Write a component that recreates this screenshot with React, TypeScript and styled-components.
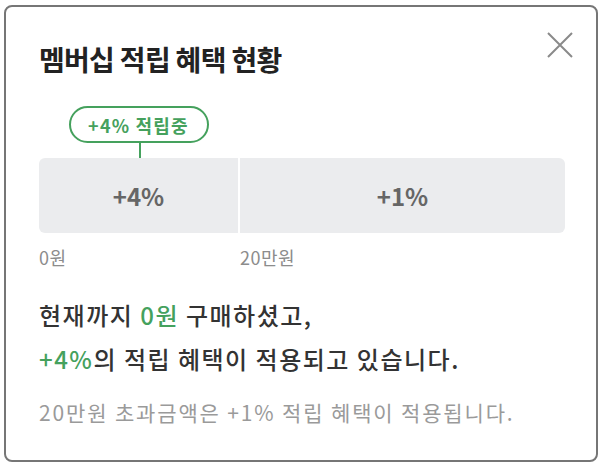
import styled, { createGlobalStyle } from "styled-components";

const GlobalStyle = createGlobalStyle`
  html, body {
    margin: 0;
    padding: 0;
    background: #ffffff;
  }
  body {
    font-family: "Noto Sans CJK KR", "Noto Sans", sans-serif;
    color: #222222;
  }
`;

const GREEN = "#45a15d";

const tiers = [
  { rate: "+4%", from: "0원", width: "199px", active: true },
  { rate: "+1%", from: "20만원", width: "1fr", active: false },
];

const App = () => {
  return (
    <>
      <GlobalStyle />
      <Page>
        <Modal>
          <Header>
            <Title>멤버십 적립 혜택 현황</Title>
            <CloseButton aria-label="닫기">
              <svg width="26" height="26" viewBox="0 0 26 26" fill="none">
                <path d="M1 1L25 25M25 1L1 25" stroke="#8a8a8a" strokeWidth="2" />
              </svg>
            </CloseButton>
          </Header>

          <Track $columns={tiers.map((t) => t.width).join(" ")}>
            {tiers.map((tier, i) => (
              <Flag key={"flag" + i}>
                {tier.active && (
                  <>
                    <Badge>{tier.rate} 적립중</Badge>
                    <Stem />
                  </>
                )}
              </Flag>
            ))}
            {tiers.map((tier, i) => (
              <Segment key={"seg" + i} $first={i === 0} $last={i === tiers.length - 1}>
                {tier.rate}
              </Segment>
            ))}
            {tiers.map((tier, i) => (
              <Mark key={"mark" + i}>{tier.from}</Mark>
            ))}
          </Track>

          <Summary>
            <Line>
              현재까지 <Accent>0원</Accent> 구매하셨고,
            </Line>
            <Line>
              <Accent>+4%</Accent>의 적립 혜택이 적용되고 있습니다.
            </Line>
          </Summary>
          <Note>20만원 초과금액은 +1% 적립 혜택이 적용됩니다.</Note>
        </Modal>
      </Page>
    </>
  );
};

export default App;

const Page = styled.div`
  width: 605px;
  height: 466px;
  padding: 5px 7px 4px 4px;
  box-sizing: border-box;
  display: flex;
`;

const Modal = styled.section`
  flex: 1;
  box-sizing: border-box;
  border: 2px solid #767676;
  border-radius: 8px;
  background: #ffffff;
  padding: 25px 23px 0 33px;
  display: flex;
  flex-direction: column;
`;

const Header = styled.header`
  display: flex;
  justify-content: space-between;
  align-items: flex-start;
`;

const Title = styled.h2`
  margin: 9px 0 0;
  font-size: 28px;
  line-height: 36px;
  font-weight: 700;
  color: #222222;
  letter-spacing: -0.7px;
`;

const CloseButton = styled.button`
  border: 0;
  background: none;
  padding: 0;
  margin: 0;
  width: 26px;
  height: 26px;
  display: flex;
  cursor: pointer;
`;

const Track = styled.div<{ $columns: string }>`
  margin-top: 29px;
  margin-right: 8px;
  display: grid;
  grid-template-columns: ${(p) => p.$columns};
  column-gap: 2px;
`;

const Flag = styled.div`
  height: 52px;
  display: flex;
  flex-direction: column;
  align-items: center;
  justify-content: flex-end;
`;

const Badge = styled.div`
  box-sizing: border-box;
  width: 140px;
  height: 37px;
  border: 2px solid ${GREEN};
  border-radius: 19px;
  display: flex;
  align-items: center;
  justify-content: center;
  font-size: 18px;
  font-weight: 700;
  letter-spacing: 1.2px;
  color: ${GREEN};
`;

const Stem = styled.div`
  width: 2px;
  height: 15px;
  margin-left: 2px;
  background: ${GREEN};
`;

const Segment = styled.div<{ $first: boolean; $last: boolean }>`
  height: 75px;
  background: #ebecee;
  border-radius: ${(p) => (p.$first ? "6px 0 0 6px" : p.$last ? "0 6px 6px 0" : "0")};
  display: flex;
  align-items: center;
  justify-content: center;
  font-size: 24px;
  font-weight: 700;
  color: #666666;
`;

const Mark = styled.div`
  margin-top: 12px;
  font-size: 18px;
  line-height: 24px;
  letter-spacing: 0.5px;
  color: #8c8c8c;
`;

const Summary = styled.div`
  margin-top: 29px;
  display: flex;
  flex-direction: column;
  gap: 10px;
`;

const Line = styled.p`
  margin: 0;
  font-size: 24px;
  line-height: 34px;
  font-weight: 500;
  color: #333333;
  letter-spacing: 1.5px;
`;

const Accent = styled.span`
  color: ${GREEN};
`;

const Note = styled.p`
  margin: 23px 0 0;
  font-size: 21px;
  line-height: 26px;
  color: #9a9a9a;
  letter-spacing: 1.85px;
`;
